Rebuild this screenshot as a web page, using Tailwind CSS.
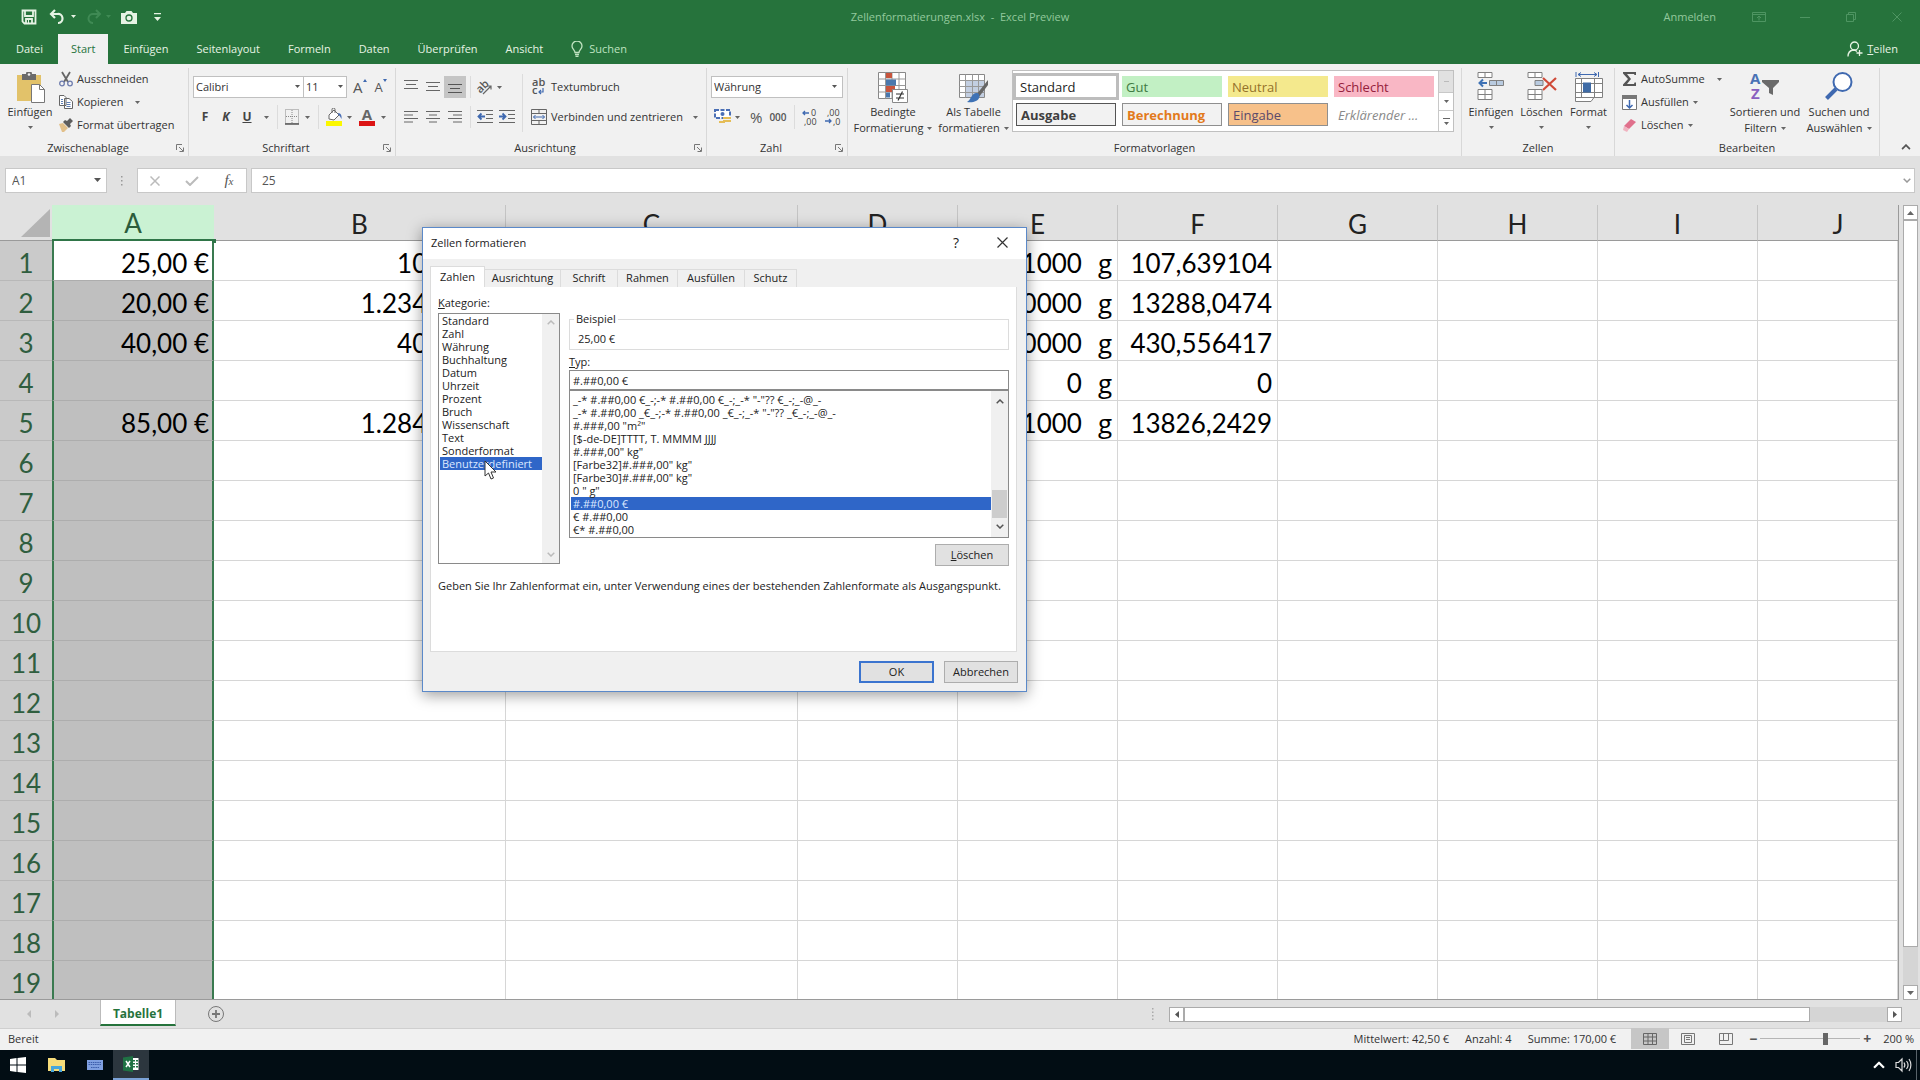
<!DOCTYPE html>
<html lang="de">

<head>
    <meta charset="UTF-8" />
    <meta name="viewport" content="width=device-width, initial-scale=1.0" />
    <title>Zellenformatierungen.xlsx - Excel Preview</title>
    <script src="https://cdn.jsdelivr.net/npm/@tailwindcss/browser@4"></script>
</head>

<body class="h-screen overflow-hidden relative flex flex-col bg-[#e1e1e1] font-['Open_Sans',sans-serif] text-[11px] leading-4 text-[#333]">

    <!-- Shared icons -->
    <svg class="hidden">
        <symbol id="caret" viewBox="0 0 7 4"><path d="M0 0h7L3.500 4z" fill="currentColor" /></symbol>
        <symbol id="launcher" viewBox="0 0 8 8"><path d="M.5 6V.5H6M3 3l4 4M7.500 3.500v4h-4" fill="none" stroke="#777" /></symbol>
        <symbol id="up" viewBox="0 0 8 5"><path d="M.7 4.300 4 1l3.300 3.300" fill="none" stroke="currentColor" stroke-width="1.500" /></symbol>
        <symbol id="down" viewBox="0 0 8 5"><path d="M.7.7 4 4 7.300.7" fill="none" stroke="currentColor" stroke-width="1.500" /></symbol>
    </svg>

    <!-- Title bar -->
    <header class="bg-[#26733c] text-[#e6f3e4]">
        <div class="h-[34px] flex items-center justify-between relative pb-px">
            <div class="flex items-center pl-[21px]">
                <button aria-label="Speichern"><svg class="w-4 h-4" viewBox="0 0 16 16" fill="none" stroke="currentColor" stroke-width="1.800"><path d="M1.500 1.500h13v13h-11l-2-2zM4 2v5h8V2M5 14v-4h6v4" /><path d="M7 11h1v3H7z" fill="currentColor" stroke="none" /></svg></button>
                <button class="ml-3" aria-label="Rückgängig"><svg class="w-4 h-4" viewBox="0 0 16 16" fill="none" stroke="currentColor" stroke-width="2.200"><path d="M6 1 2 5l4 4M2 5h6.500a4.500 4.500 0 0 1 1 9H9" /></svg></button>
                <svg class="w-[5px] h-[3px] ml-1.5"><use href="#caret" /></svg>
                <button class="ml-2.5 text-[#3f8a54]" aria-label="Wiederholen"><svg class="w-4 h-4" viewBox="0 0 16 16" fill="none" stroke="currentColor" stroke-width="2"><path d="m10 1 4 4-4 4M14 5H7.500a4.500 4.500 0 0 0-1 9H7" /></svg></button>
                <svg class="w-[5px] h-[3px] ml-1 text-[#3f8a54]"><use href="#caret" /></svg>
                <button class="ml-2.5" aria-label="Kamera"><svg class="w-4 h-4" viewBox="0 0 16 16"><path d="M0 4h4l1.500-2h5L12 4h4v11H0z" fill="currentColor" /><circle cx="8" cy="9" r="3" fill="none" stroke="#26733c" stroke-width="1.300" /></svg></button>
                <button class="ml-[17px]" aria-label="Anpassen"><svg class="w-[7px] h-2" viewBox="0 0 7 8" fill="currentColor"><path d="M0 0h7v1.300H0zM0 4h7L3.500 8z" /></svg></button>
            </div>
            <div class="absolute inset-x-0 text-center text-[#93c99d] pointer-events-none">Zellenformatierungen.xlsx &nbsp;-&nbsp; Excel Preview</div>
            <div class="flex items-center pr-[18px] text-[#4e9562]">
                <a href="#" class="text-[#93c99d] mr-9">Anmelden</a>
                <button class="mr-[34px]" aria-label="Menüband anzeigen"><svg class="w-3.5 h-2.5" viewBox="0 0 14 10" fill="none" stroke="currentColor"><path d="M.5.5h13v9H.5zM1 2.500h12M7 8.500v-4M5 6l2-2 2 2" /></svg></button>
                <button class="mr-9" aria-label="Minimieren"><svg class="w-2.5 h-2.5" viewBox="0 0 10 10" stroke="currentColor"><path d="M0 5.500h10" /></svg></button>
                <button class="mr-9" aria-label="Verkleinern"><svg class="w-2.5 h-2.5" viewBox="0 0 10 10" fill="none" stroke="currentColor"><path d="M.5 2.500h7v7h-7zM2.500 2V.5h7v7H8" /></svg></button>
                <button aria-label="Schließen"><svg class="w-2.5 h-2.5" viewBox="0 0 10 10" stroke="currentColor"><path d="m.5.5 9 9m0-9-9 9" /></svg></button>
            </div>
        </div>
        <nav class="h-[30px] flex items-stretch pl-[2px]">
            <button class="px-[14px]">Datei</button>
            <button class="px-[13px] mx-px bg-[#f1f1f1] text-[#26733c]">Start</button>
            <button class="px-[14px]">Einfügen</button>
            <button class="px-[14px]">Seitenlayout</button>
            <button class="px-[14px]">Formeln</button>
            <button class="px-[14px]">Daten</button>
            <button class="px-[14px]">Überprüfen</button>
            <button class="px-[14px]">Ansicht</button>
            <button class="px-[14px] flex items-center gap-1.5 text-[#bfe3c0]">
                <svg class="w-3 h-4" viewBox="0 0 12 16" fill="none" stroke="currentColor" stroke-width="1.300"><path d="M4 11.500C4 9 1 8 1 5a5 5 0 0 1 10 0c0 3-3 4-3 6.500zM4 13.500h4M4.500 15.300h3" /></svg>Suchen
            </button>
            <button class="ml-auto pr-[22px] flex items-center gap-1">
                <svg class="w-4 h-4" viewBox="0 0 16 16" fill="none" stroke="currentColor" stroke-width="1.300"><circle cx="7.500" cy="5" r="4" /><path d="M1 15.500c0-4 2.500-6 5-6.500 2 0 3 .5 4 1.500M12.500 9v6M9.500 12h6" /></svg>
                <span><u>T</u>eilen</span>
            </button>
        </nav>
    </header>

    <!-- Ribbon -->
    <div class="h-[92px] bg-[#f1f1f1] flex pt-1">
        <!-- Zwischenablage -->
        <section class="w-[189px] shrink-0 border-r border-[#d8d8d8] flex flex-col">
            <div class="flex-1 flex pl-[5px]">
                <button class="w-[50px] h-[68px] flex flex-col items-center pt-1">
                    <svg class="w-[30px] h-[32px]" viewBox="0 0 30 32"><path d="M2 3h24v26H2z" fill="#e2c26a" /><path d="M7 2h4a3 3 0 0 1 6 0h4v6H7z" fill="#6a6a6a" /><circle cx="14" cy="2.500" r="1.300" fill="#f1f1f1" /><path d="M16.500 12.500h8l5 5v13h-13z" fill="#fff" stroke="#777" /><path d="M24.500 12.500v5h5" fill="none" stroke="#777" /></svg>
                    <span>Einfügen</span>
                    <svg class="w-[5px] h-[3px] mt-1.5 text-[#666]"><use href="#caret" /></svg>
                </button>
                <div class="flex flex-col pl-1">
                    <button class="h-[23px] pb-px flex items-center gap-1"><svg class="w-3.5 h-4" viewBox="0 0 14 16" fill="none"><path d="m3 1 6 10M11 1 5 11" stroke="#666" stroke-width="1.800" /><circle cx="3" cy="12.500" r="2.300" stroke="#6f7dae" stroke-width="1.300" /><circle cx="11" cy="12.500" r="2.300" stroke="#6f7dae" stroke-width="1.300" /></svg>Ausschneiden</button>
                    <button class="h-[23px] pb-px flex items-center gap-1"><svg class="w-3.5 h-3.5" viewBox="0 0 14 14" fill="#fff" stroke="#666"><path d="M.5.5H5l2 2v8H.5zM5.500 3.500H10l3.500 3v7h-8z" /><path d="M7.500 7.500h4M7.500 9.500h4M7.500 11.500h4M2 4.500h2M2 6.500h2M2 8.500h2" stroke="#5f7fb5" /></svg>Kopieren<svg class="w-[5px] h-[3px] ml-2 text-[#666]"><use href="#caret" /></svg></button>
                    <button class="h-[23px] pb-px flex items-center gap-1"><svg class="w-3.5 h-3.5" viewBox="0 0 14 14"><path d="m0 6 4-1 5 5-4 4H3z" fill="#e2c08a" /><path d="m4 4 2-2 2 1 3-3 3 3-3 3 1 2-2 2z" fill="#5d5d5d" /></svg>Format übertragen</button>
                </div>
            </div>
            <div class="h-4 flex items-center pr-1"><span class="flex-1 text-center">Zwischenablage</span><button aria-label="Mehr Zwischenablage"><svg class="w-2 h-2"><use href="#launcher" /></svg></button></div>
        </section>

        <!-- Schriftart -->
        <section class="w-[207px] shrink-0 border-r border-[#d8d8d8] flex flex-col">
            <div class="flex-1 pl-1 pt-2">
                <div class="flex items-center h-[22px]">
                    <label class="relative"><select aria-label="Schriftart" class="appearance-none w-[111px] h-[22px] border border-[#c0c0c0] bg-white pl-0.5"><option>Calibri</option></select><svg class="absolute right-1 top-[9px] w-[5px] h-[3px] text-[#555]"><use href="#caret" /></svg></label>
                    <label class="relative"><select aria-label="Schriftgrad" class="appearance-none w-[43px] h-[22px] border border-l-0 border-[#c0c0c0] bg-white pl-0.5"><option>11</option></select><svg class="absolute right-1 top-[9px] w-[5px] h-[3px] text-[#555]"><use href="#caret" /></svg></label>
                    <button class="ml-1.5 flex text-[15px] text-[#555]" aria-label="Schriftgrad vergrößern">A<svg class="w-1 h-[3px]" viewBox="0 0 4 3"><path d="M0 3h4L2 0z" fill="#3f69b0" /></svg></button>
                    <button class="ml-2 flex text-[13px] text-[#555]" aria-label="Schriftgrad verkleinern">A<svg class="w-1 h-[3px]" viewBox="0 0 4 3"><path d="M0 0h4L2 3z" fill="#3f69b0" /></svg></button>
                </div>
                <div class="flex items-center h-[22px] mt-2 pl-[7px] text-[12px] font-bold text-[#444]">
                    <button class="w-[10px]">F</button>
                    <button class="w-[10px] ml-[11px] italic">K</button>
                    <button class="w-[10px] ml-[11px] underline">U</button>
                    <svg class="w-[5px] h-[3px] ml-3 text-[#666]"><use href="#caret" /></svg>
                    <span class="ml-2 w-px h-6 bg-[#dcdcdc]"></span>
                    <button class="ml-[7px]" aria-label="Rahmen"><svg class="w-3.5 h-4" viewBox="0 0 14 16" fill="none" stroke="#888"><path d="M.5.5h13v14H.5zM7 1v13M1 7.500h12" stroke-dasharray="1 1" /><path d="M0 15h14" stroke="#555" stroke-width="1.500" /></svg></button>
                    <svg class="w-[5px] h-[3px] ml-1.5 text-[#666]"><use href="#caret" /></svg>
                    <span class="ml-2 w-px h-6 bg-[#dcdcdc]"></span>
                    <button class="ml-[7px]" aria-label="Füllfarbe"><svg class="w-[17px] h-[18px]" viewBox="0 0 17 18"><path d="m3 7 5-5 5 5-5 5-5-1z" fill="#fff" stroke="#666" /><path d="M6 5V1.500a1.500 1.500 0 0 1 3 0V5" fill="none" stroke="#666" /><path d="M12 5c3 0 4 3 3.500 6-1-1-1-3-3-4z" fill="#4a6fb5" /><path d="M0 13h16v5H0z" fill="#fbf700" /></svg></button>
                    <svg class="w-[5px] h-[3px] ml-1 text-[#666]"><use href="#caret" /></svg>
                    <button class="ml-[7px] w-4 h-[18px] flex justify-center items-start text-[15px] leading-[13px] text-[#666] border-b-5 border-[#dc1414]" aria-label="Schriftfarbe">A</button>
                    <svg class="w-[5px] h-[3px] ml-1.5 text-[#666]"><use href="#caret" /></svg>
                </div>
            </div>
            <div class="h-4 flex items-center pr-1"><span class="flex-1 text-center">Schriftart</span><button aria-label="Mehr Schriftart"><svg class="w-2 h-2"><use href="#launcher" /></svg></button></div>
        </section>

        <!-- Ausrichtung -->
        <section class="w-[311px] shrink-0 border-r border-[#d8d8d8] flex flex-col">
            <div class="flex-1 flex">
                <div class="w-[127px] h-[58px] border-r border-[#dcdcdc] mt-1.5 pt-0.5 pl-[4px]">
                    <div class="flex items-center h-[22px]">
                        <button class="w-[22px] h-[22px] flex justify-center pt-1" aria-label="Oben"><svg class="w-3.5 h-2.5" viewBox="0 0 14 10" stroke="#666"><path d="M0 .5h14M2 4.500h10M0 8.500h14" /></svg></button>
                        <button class="w-[22px] h-[22px] flex justify-center items-center" aria-label="Mitte"><svg class="w-3.5 h-2.5" viewBox="0 0 14 10" stroke="#666"><path d="M0 .5h14M2 4.500h10M0 8.500h14" /></svg></button>
                        <button class="w-[22px] h-[22px] flex justify-center items-end pb-1 bg-[#c5c5c5]" aria-label="Unten"><svg class="w-3.5 h-2.5" viewBox="0 0 14 10" stroke="#555"><path d="M0 .5h14M2 4.500h10M0 8.500h14" /></svg></button>
                        <span class="ml-1 w-px h-[22px] bg-[#dcdcdc]"></span>
                        <button class="ml-1.5" aria-label="Orientierung"><svg class="w-4 h-4 overflow-visible" viewBox="0 0 16 16"><text x="0" y="11" transform="rotate(-45 6 9)" font-size="11" font-weight="600" fill="#555">ab</text><path d="m6 15 8-8M10.500 7H14v3.500" fill="none" stroke="#666" stroke-width="1.200" /></svg></button>
                        <svg class="w-[5px] h-[3px] ml-1 text-[#666]"><use href="#caret" /></svg>
                    </div>
                    <div class="flex items-center h-[22px] mt-2">
                        <button class="w-[22px] flex justify-center" aria-label="Linksbündig"><svg class="w-3.5 h-3" viewBox="0 0 14 12" stroke="#666"><path d="M0 .5h14M0 4h9M0 7.500h14M0 11h9" /></svg></button>
                        <button class="w-[22px] flex justify-center" aria-label="Zentriert"><svg class="w-3.5 h-3" viewBox="0 0 14 12" stroke="#666"><path d="M0 .5h14M3 4h8M0 7.500h14M3 11h8" /></svg></button>
                        <button class="w-[22px] flex justify-center" aria-label="Rechtsbündig"><svg class="w-3.5 h-3" viewBox="0 0 14 12" stroke="#666"><path d="M0 .5h14M5 4h9M0 7.500h14M5 11h9" /></svg></button>
                        <span class="ml-1 w-px h-[22px] bg-[#dcdcdc]"></span>
                        <button class="ml-1.5" aria-label="Einzug verkleinern"><svg class="w-4 h-3.5" viewBox="0 0 16 14" fill="none" stroke="#666"><path d="M0 .5h16M9 4.500h7M9 8.500h7M0 12.500h16" /><path d="M8 6.500H2M4.500 3.500l-3 3 3 3" stroke="#3f69b0" stroke-width="1.800" /></svg></button>
                        <button class="ml-1.5" aria-label="Einzug vergrößern"><svg class="w-4 h-3.5" viewBox="0 0 16 14" fill="none" stroke="#666"><path d="M0 .5h16M9 4.500h7M9 8.500h7M0 12.500h16" /><path d="M0 6.500h6M3.500 3.500l3 3-3 3" stroke="#3f69b0" stroke-width="1.800" /></svg></button>
                    </div>
                </div>
                <div class="pt-2 pl-2">
                    <button class="flex items-center gap-1 h-[22px]"><svg class="w-4 h-4 overflow-visible" viewBox="0 0 16 16"><text x="1" y="7" font-size="11" font-weight="600" fill="#555">ab</text><text x="1" y="15" font-size="11" font-weight="600" fill="#555">c</text><path d="M12 9v4H8.500M10 11l-2 2 2 2" fill="none" stroke="#3f69b0" stroke-width="1.200" /></svg>Textumbruch</button>
                    <button class="flex items-center gap-1 h-[22px] mt-2"><svg class="w-4 h-4" viewBox="0 0 16 16" fill="none" stroke="#666"><path d="M.5.5h15v15H.5zM.5 4.500h15M.5 11.500h15M8 .5v4M8 11.500v4" /><path d="M2.500 8h11M4.500 6l-2 2 2 2M11.500 6l2 2-2 2" stroke="#3f69b0" /></svg>Verbinden und zentrieren<svg class="w-[5px] h-[3px] ml-1.5 text-[#666]"><use href="#caret" /></svg></button>
                </div>
            </div>
            <div class="h-4 flex items-center pr-1"><span class="flex-1 text-center">Ausrichtung</span><button aria-label="Mehr Ausrichtung"><svg class="w-2 h-2"><use href="#launcher" /></svg></button></div>
        </section>

        <!-- Zahl -->
        <section class="w-[141px] shrink-0 border-r border-[#d8d8d8] flex flex-col">
            <div class="flex-1 pl-1 pt-2">
                <label class="relative block"><select aria-label="Zahlenformat" class="appearance-none w-[132px] h-[22px] border border-[#c0c0c0] bg-white pl-0.5"><option>Währung</option></select><svg class="absolute right-2.5 top-[9px] w-[5px] h-[3px] text-[#555]"><use href="#caret" /></svg></label>
                <div class="flex items-center h-[22px] mt-2 pl-[3px]">
                    <button aria-label="Buchhaltungszahlenformat"><svg class="w-[17px] h-4" viewBox="0 0 17 16"><path d="M1 1h15v8H1z" fill="#fff" stroke="#4a6fb5" stroke-width="2" stroke-dasharray="4 1.500" /><circle cx="8.500" cy="5" r="2" fill="#4a6fb5" /><path d="M9 8h8v2H9zM9 11h8v2H9zM5 12h6v2H5z" fill="#e5bd57" /></svg></button>
                    <svg class="w-[5px] h-[3px] ml-1 text-[#666]"><use href="#caret" /></svg>
                    <button class="ml-2.5 text-[15px] text-[#555]">%</button>
                    <button class="ml-[7px] text-[10px] font-semibold text-[#555]">000</button>
                    <span class="ml-[7px] w-px h-6 bg-[#dcdcdc]"></span>
                    <button class="ml-[7px]" aria-label="Dezimalstelle hinzufügen"><svg class="w-4 h-4 overflow-visible" viewBox="0 0 16 16"><text x="9" y="7" font-size="9" fill="#444">0</text><text x="2" y="16" font-size="9" fill="#444">,00</text><path d="M7 4H1M3 2 1 4l2 2" fill="none" stroke="#3f69b0" stroke-width="1.300" /></svg></button>
                    <button class="ml-[7px]" aria-label="Dezimalstelle entfernen"><svg class="w-4 h-4 overflow-visible" viewBox="0 0 16 16"><text x="2" y="7" font-size="9" fill="#444">,00</text><text x="8" y="16" font-size="9" fill="#444">,0</text><path d="M0 12h6M4 10l2 2-2 2" fill="none" stroke="#3f69b0" stroke-width="1.300" /></svg></button>
                </div>
            </div>
            <div class="h-4 flex items-center pr-1"><span class="flex-1 text-center">Zahl</span><button aria-label="Mehr Zahl"><svg class="w-2 h-2"><use href="#launcher" /></svg></button></div>
        </section>

        <!-- Formatvorlagen -->
        <section class="w-[614px] shrink-0 border-r border-[#d8d8d8] flex flex-col">
            <div class="flex-1 flex pl-px">
                <button class="w-[88px] h-[68px] flex flex-col items-center pt-1">
                    <svg class="w-[30px] h-[32px]" viewBox="0 0 30 32"><path d="M.5.5h27v26H.5z" fill="#fff" stroke="#888" /><path d="M.5 7h27M.5 13.500h27M.5 20h27M7.500.5v26M14 .5v26M21 .5v26" stroke="#999" /><path d="M8 1h6v5H8zM8 14h9v6H8z" fill="#c8553d" /><path d="M8 7.500h10v6H8zM8 20.500h4v5H8z" fill="#4a78ad" /><path d="M14.500 17.500h15v13h-15z" fill="#fff" stroke="#888" /><path d="M18 22h8M18 26h8M24.500 19.500l-4.500 9" stroke="#333" stroke-width="1.200" /></svg>
                    <span>Bedingte</span>
                    <span class="flex items-center gap-1">Formatierung<svg class="w-[5px] h-[3px] text-[#666]"><use href="#caret" /></svg></span>
                </button>
                <button class="w-[73px] h-[68px] flex flex-col items-center pt-1">
                    <svg class="w-[30px] h-[32px]" viewBox="0 0 30 32"><path d="M.5 2.500h25v23H.5z" fill="#fff" stroke="#888" /><path d="M7 9h18v16H7z" fill="#c3cfe2" /><path d="M.5 8.500h25M.5 14.500h25M.5 20.500h25M6.500 2.500v23M13.500 2.500v23M19.500 2.500v23" stroke="#999" /><path d="M29 8v5l-9 12-3-2z" fill="#666" /><path d="M17 21c3 0 4 2 3 5s-6 5-12 4c4-2 4-8 9-9z" fill="#3f72b5" /></svg>
                    <span>Als Tabelle</span>
                    <span class="flex items-center gap-1">formatieren<svg class="w-[5px] h-[3px] text-[#666]"><use href="#caret" /></svg></span>
                </button>
                <div class="mt-0.5 ml-0.5 w-[442px] h-[62px] bg-white border border-[#c0c0c0] flex text-[13px]">
                    <div class="flex-1 grid grid-cols-4 gap-x-1.5 gap-y-1.5 pl-[3px] pr-1 pt-[5px] pb-[5px]">
                        <button class="text-left px-1 bg-white outline-3 outline-[#bdbdbd] text-[#222]">Standard</button>
                        <button class="text-left px-1 bg-[#c2f0c4] text-[#3f7a42]">Gut</button>
                        <button class="text-left px-1 bg-[#f4e98d] text-[#94712a]">Neutral</button>
                        <button class="text-left px-1 bg-[#f9b7c5] text-[#95213c]">Schlecht</button>
                        <button class="text-left px-1 bg-[#f2f2f2] border border-[#555] font-bold text-[#3f3f3f]">Ausgabe</button>
                        <button class="text-left px-1 bg-[#f2f2f2] border border-[#8f8f8f] font-bold text-[#e27a1c]">Berechnung</button>
                        <button class="text-left px-1 bg-[#f7c18a] border border-[#8f8f8f] text-[#5b4a6b]">Eingabe</button>
                        <button class="text-left px-1 italic text-[#8a8a8a]">Erklärender ...</button>
                    </div>
                    <div class="w-[15px] border-l border-[#c8c8c8] flex flex-col text-[#666]">
                        <button class="h-[21px] flex items-center justify-center bg-[#e1e1e1]" aria-label="Nach oben"><svg class="w-[5px] h-px" viewBox="0 0 5 1"><path d="M0 0h5v1H0z" fill="#bbb" /></svg></button>
                        <button class="h-[19px] flex items-center justify-center border-y border-[#c8c8c8]" aria-label="Nach unten"><svg class="w-[5px] h-[3px]"><use href="#caret" /></svg></button>
                        <button class="flex-1 flex items-center justify-center" aria-label="Mehr"><svg class="w-[7px] h-[7px]" viewBox="0 0 7 7" fill="currentColor"><path d="M0 0h7v1H0zM1 4h5L3.500 7z" /></svg></button>
                    </div>
                </div>
            </div>
            <div class="h-4 text-center">Formatvorlagen</div>
        </section>

        <!-- Zellen -->
        <section class="w-[153px] shrink-0 border-r border-[#d8d8d8] flex flex-col">
            <div class="flex-1 flex justify-center">
                <button class="w-[51px] h-[68px] flex flex-col items-center pt-1">
                    <svg class="w-[28px] h-[32px]" viewBox="0 0 28 32" fill="#fff" stroke="#808080"><path d="M1 .5h14v5H1zM8 .5v5M1 17.500h14v10H1zM8 17.500v10M1 22.500h14" /><path d="M12.500 8.500h14v5h-14z" fill="#b9cbe0" /><path d="M19.500 8.500v5" /><path d="M10 11H3M6 7.500 2.500 11 6 14.500" fill="none" stroke="#3f72b5" stroke-width="2" /></svg>
                    <span>Einfügen</span><svg class="w-[5px] h-[3px] mt-1.5 text-[#666]"><use href="#caret" /></svg>
                </button>
                <button class="w-[50px] h-[68px] flex flex-col items-center pt-1">
                    <svg class="w-[30px] h-[32px]" viewBox="0 0 30 32" fill="#fff" stroke="#808080"><path d="M1 .5h14v5H1zM8 .5v5M1 17.500h14v10H1zM8 17.500v10M1 22.500h14" /><path d="M8 8.500h8v5H8z" fill="#b9cbe0" /><path d="m16 6 13 12M29 6 16 18" stroke="#cf4a38" stroke-width="2.200" /></svg>
                    <span>Löschen</span><svg class="w-[5px] h-[3px] mt-1.5 text-[#666]"><use href="#caret" /></svg>
                </button>
                <button class="w-[44px] h-[68px] flex flex-col items-center pt-1">
                    <svg class="w-[28px] h-[32px]" viewBox="0 0 28 32" fill="#fff" stroke="#808080"><path d="M.5 6.500h27v19H19l-3 4H.5z" /><path d="M.5 11.500h27M.5 20.500h27M.5 25.500H19M6.500 6.500v19M19.500 6.500v19" /><path d="M8 10.500h8v10H8z" fill="#3f6ba5" stroke="none" /><path d="M1 0v5M23.500 0v5M3 2.500h19M6 .5l-3 2 3 2M19 .5l3 2-3 2" fill="none" stroke="#3f69b0" /></svg>
                    <span>Format</span><svg class="w-[5px] h-[3px] mt-1.5 text-[#666]"><use href="#caret" /></svg>
                </button>
            </div>
            <div class="h-4 text-center">Zellen</div>
        </section>

        <!-- Bearbeiten -->
        <section class="w-[265px] shrink-0 border-r border-[#d8d8d8] flex flex-col">
            <div class="flex-1 flex pl-[7px]">
                <div class="w-[105px] flex flex-col">
                    <button class="h-[23px] pb-px flex items-center gap-1"><svg class="w-[15px] h-4" viewBox="0 0 15 16"><path d="M1 1h13v3h-1.500L12 3H5l4 5-4 5h7l.5-1.500H14V15H1v-1.500L6 8 1 2.500z" fill="#555" /></svg>AutoSumme<svg class="w-[5px] h-[3px] ml-2 text-[#666]"><use href="#caret" /></svg></button>
                    <button class="h-[23px] pb-px flex items-center gap-1"><svg class="w-[15px] h-[15px]" viewBox="0 0 15 15"><path d="M.5.5h14v14H.5z" fill="#fff" stroke="#777" /><path d="M0 0h15v4H0z" fill="#777" /><path d="M7.500 5v8M4.500 10l3 3 3-3" fill="none" stroke="#3f69b0" stroke-width="1.500" /></svg>Ausfüllen<svg class="w-[5px] h-[3px] text-[#666]"><use href="#caret" /></svg></button>
                    <button class="h-[23px] pb-px flex items-center gap-1"><svg class="w-[15px] h-[15px]" viewBox="0 0 15 15"><path d="m2 8 7-7 5 3-7 7z" fill="#e0708c" /><path d="m2 8 5 3-2 3-4-2z" fill="#f0b3c0" /></svg>Löschen<svg class="w-[5px] h-[3px] text-[#666]"><use href="#caret" /></svg></button>
                </div>
                <button class="w-[76px] h-[68px] flex flex-col items-center pt-1">
                    <svg class="w-[30px] h-[32px] overflow-visible" viewBox="0 0 30 32"><text x="0" y="12" font-size="15" font-weight="700" fill="#4a72b5">A</text><text x="1" y="27" font-size="15" font-weight="700" fill="#8a5fc0">Z</text><path d="M12 8h17v2l-6 6v7l-4-2v-5l-7-6z" fill="#6a6a6a" /></svg>
                    <span>Sortieren und</span>
                    <span class="flex items-center gap-1">Filtern<svg class="w-[5px] h-[3px] text-[#666]"><use href="#caret" /></svg></span>
                </button>
                <button class="w-[72px] h-[68px] flex flex-col items-center pt-1">
                    <svg class="w-[28px] h-[32px]" viewBox="0 0 28 32" fill="none" stroke="#3f69b0"><circle cx="17.500" cy="10" r="9" fill="#fff" stroke-width="2" /><path d="M11 17 1.500 26.500" stroke-width="4" /></svg>
                    <span>Suchen und</span>
                    <span class="flex items-center gap-1">Auswählen<svg class="w-[5px] h-[3px] text-[#666]"><use href="#caret" /></svg></span>
                </button>
            </div>
            <div class="h-4 text-center">Bearbeiten</div>
        </section>
        <div class="flex-1 flex items-end justify-center pl-3"><button class="mb-1.5" aria-label="Menüband reduzieren"><svg class="w-2.5 h-1.5 text-[#555]" viewBox="0 0 8 5"><use href="#up" /></svg></button></div>
    </div>

    <!-- Formula bar -->
    <div class="pt-3 pl-[5px] pr-[5px] h-[37px] flex text-[12px] text-[#555]">
        <label class="relative"><input aria-label="Namenfeld" value="A1" class="w-[102px] h-[25px] bg-white border border-[#c8c8c8] pl-1.5" /><svg class="absolute right-1.5 top-[10px] w-[7px] h-1"><use href="#caret" /></svg></label>
        <svg class="w-[30px] h-[25px]" viewBox="0 0 30 25" fill="#999"><path d="M14 8h1.500v1.500H14zM14 12h1.500v1.500H14zM14 16h1.500v1.500H14z" /></svg>
        <div class="w-[110px] h-[25px] bg-white border border-[#c8c8c8] flex items-center justify-around">
            <button aria-label="Abbrechen"><svg class="w-2.5 h-2.5" viewBox="0 0 10 10" stroke="#bbb" stroke-width="1.500"><path d="m.5.5 9 9m0-9-9 9" /></svg></button>
            <button aria-label="Eingeben"><svg class="w-3.5 h-2.5" viewBox="0 0 14 10" fill="none" stroke="#bbb" stroke-width="2"><path d="m1 5 4 4 8-8" /></svg></button>
            <button class="font-['Liberation_Serif',serif] italic text-[15px]">f<span class="text-[11px]">x</span></button>
        </div>
        <label class="relative flex-1 ml-1"><input aria-label="Bearbeitungsleiste" value="25" class="w-full h-[25px] bg-white border border-[#c8c8c8] pl-2.5" /><svg class="absolute right-1 top-[10px] w-2 h-[5px] text-[#999]"><use href="#down" /></svg></label>
    </div>

    <!-- Sheet -->
    <main class="flex-1 min-h-0 flex pt-3">
        <div class="flex-1 min-w-0 overflow-hidden border-r border-b border-[#9a9a9a]">
            <table class="w-full table-fixed border-separate border-spacing-0 font-['Lato','Open_Sans',sans-serif] text-[26px] leading-8 text-black">
                <colgroup>
                    <col class="w-[52px]" /><col class="w-[162px]" /><col class="w-[292px]" /><col class="w-[292px]" />
                    <col class="w-[160px]" /><col class="w-[160px]" /><col class="w-[160px]" /><col class="w-[160px]" />
                    <col class="w-[160px]" /><col class="w-[160px]" /><col />
                </colgroup>
                <thead>
                    <tr id="columnRow">
                        <th class="h-9 p-0 border-b border-[#9a9a9a]"><svg class="w-[29px] h-[28px] ml-auto mr-0.5" viewBox="0 0 29 28"><path d="M29 0v28H0z" fill="#b4b4b4" /></svg></th>
                    </tr>
                </thead>
                <tbody id="sheetRows"></tbody>
            </table>
        </div>
        <div class="w-[21px] flex flex-col items-center pl-px">
            <button class="w-[15px] h-[15px] bg-white border border-[#ababab] flex items-center justify-center" aria-label="Nach oben"><svg class="w-[7px] h-1 rotate-180 text-[#666]"><use href="#caret" /></svg></button>
            <div class="flex-1 w-[15px] bg-[#d5d5d5]"><div class="h-[95%] bg-white border border-[#ababab]"></div></div>
            <button class="w-[15px] h-[15px] bg-white border border-[#ababab] flex items-center justify-center" aria-label="Nach unten"><svg class="w-[7px] h-1 text-[#666]"><use href="#caret" /></svg></button>
        </div>
    </main>

    <!-- Sheet tabs -->
    <div class="h-[29px] flex items-start border-b border-[#cfcfcf]">
        <button class="ml-[27px] mt-2.5" aria-label="Vorheriges Blatt"><svg class="w-[5px] h-2" viewBox="0 0 5 8"><path d="M4 0v8L0 4z" fill="#bbb" /></svg></button>
        <button class="ml-[22px] mt-2.5" aria-label="Nächstes Blatt"><svg class="w-[5px] h-2" viewBox="0 0 5 8"><path d="M1 0v8l4-4z" fill="#bbb" /></svg></button>
        <button class="ml-[41px] w-[76px] h-[26px] pt-[3px] bg-white border-x border-b-2 border-x-[#bbb] border-b-[#26733c] font-bold text-[12px] text-[#26733c]">Tabelle1</button>
        <button class="ml-8 mt-1.5" aria-label="Neues Blatt"><svg class="w-4 h-4" viewBox="0 0 16 16" fill="none" stroke="#777"><circle cx="8" cy="8" r="7.500" /><path d="M8 4v8M4 8h8" stroke-width="1.800" /></svg></button>
        <svg class="ml-auto mt-2 w-1 h-3" viewBox="0 0 4 12" fill="#aaa"><path d="M1 0h1.500v1.500H1zM1 3.500h1.500V5H1zM1 7h1.500v1.500H1zM1 10.500h1.500V12H1z" /></svg>
        <div class="w-[733px] ml-[14px] mr-[18px] mt-[7px] h-[15px] flex bg-[#d5d5d5]">
            <button class="w-[15px] bg-white border border-[#ababab] flex items-center justify-center" aria-label="Nach links"><svg class="w-1 h-[7px]" viewBox="0 0 4 7"><path d="M4 0v7L0 3.500z" fill="#555" /></svg></button>
            <div class="flex-1"><div class="h-full w-[89%] bg-white border border-[#ababab]"></div></div>
            <button class="w-[15px] bg-white border border-[#ababab] flex items-center justify-center" aria-label="Nach rechts"><svg class="w-1 h-[7px]" viewBox="0 0 4 7"><path d="M0 0v7l4-3.500z" fill="#555" /></svg></button>
        </div>
    </div>

    <!-- Status bar -->
    <footer class="h-[21px] pb-0.5 bg-[#f1f1f1] flex items-center pl-2 pr-1.5">
        <span>Bereit</span>
        <span class="ml-auto mr-4">Mittelwert: 42,50 €</span>
        <span class="mr-4">Anzahl: 4</span>
        <span class="mr-[15px]">Summe: 170,00 €</span>
        <button class="w-[38px] h-[21px] bg-[#c6c6c6] flex items-center justify-center" aria-label="Normal"><svg class="w-3.5 h-3" viewBox="0 0 14 12" fill="none" stroke="#666"><path d="M.5.5h13v11H.5zM.5 4h13M.5 8h13M5 .5v11M9.500.5v11" /></svg></button>
        <button class="w-[38px] h-full flex items-center justify-center" aria-label="Seitenlayout"><svg class="w-3.5 h-3" viewBox="0 0 14 12" fill="none" stroke="#777"><path d="M.5.5h13v11H.5zM3.500 2.500h7v7h-7zM5 4.500h4M5 6.500h4" /></svg></button>
        <button class="w-[38px] h-full flex items-center justify-center" aria-label="Umbruchvorschau"><svg class="w-3.5 h-3" viewBox="0 0 14 12" fill="none" stroke="#777"><path d="M.5.5h13v11H.5zM4.500.5v7M9.500.5v7M.5 7.500h9" /></svg></button>
        <button class="ml-1 text-[14px] font-bold text-[#555]">−</button>
        <input type="range" min="0" max="100" value="66" aria-label="Zoom" class="appearance-none w-[100px] h-3 mx-[3px] bg-[linear-gradient(#b5b5b5,#b5b5b5)] bg-[length:100%_1px] bg-center bg-no-repeat [&::-webkit-slider-thumb]:appearance-none [&::-webkit-slider-thumb]:w-[5px] [&::-webkit-slider-thumb]:h-3 [&::-webkit-slider-thumb]:bg-[#666]" />
        <button class="text-[14px] font-bold text-[#555]">+</button>
        <span class="ml-3">200 %</span>
    </footer>

    <!-- Taskbar -->
    <div class="h-[30px] bg-[#020d14] flex items-center justify-between text-white">
        <div class="flex h-full items-center">
            <button class="w-9 flex justify-center" aria-label="Start"><svg class="w-4 h-4" viewBox="0 0 16 16" fill="#fff"><path d="m0 2 6.500-1v6.500H0zM7.500 1 16 0v7.500H7.500zM0 8.500h6.500V15L0 14zM7.500 8.500H16V16l-8.500-1z" /></svg></button>
            <button class="w-10 flex justify-center" aria-label="Explorer"><svg class="w-[17px] h-[15px]" viewBox="0 0 17 15"><path d="M0 0h7l2 2h8v11H0z" fill="#f6dc7a" /><path d="M3 14V8h11v6h-3v-3H6v3z" fill="#47a6dc" /></svg></button>
            <button class="w-[37px] flex justify-center" aria-label="Tastatur"><svg class="w-4 h-2.5" viewBox="0 0 16 10"><path d="M0 0h16v10H0z" fill="#7f9fe0" /><path d="M1.500 2.500h13M1.500 4.500h13M4 7.500h8" stroke="#3b5caa" stroke-dasharray="1.500 .7" /></svg></button>
            <button class="w-9 h-full flex items-center justify-center bg-[#2c363e] border-b-2 border-[#7ba2d6]" aria-label="Excel"><svg class="w-4 h-4" viewBox="0 0 16 16"><path d="M8 2h7.500v12H8z" fill="#fff" /><path d="M10 4h2v1.500h-2zM13 4h2v1.500h-2zM10 7h2v1.500h-2zM13 7h2v1.500h-2zM10 10h2v1.500h-2zM13 10h2v1.500h-2z" fill="#1f7244" /><path d="m0 1.500 10-1.500v16L0 14.500z" fill="#1f7244" /><path d="m3 5 4 6M7 5l-4 6" stroke="#fff" stroke-width="1.500" /></svg></button>
        </div>
        <div class="flex h-full items-center pr-[3px]">
            <button class="mr-2.5" aria-label="Ausgeblendete Symbole"><svg class="w-3 h-2" viewBox="0 0 8 5"><use href="#up" /></svg></button>
            <button aria-label="Lautstärke"><svg class="w-[17px] h-4" viewBox="0 0 17 16" fill="none" stroke="#ddd" stroke-width="1.200"><path d="M1 5.500h2.500L7 2v12l-3.500-3.500H1zM9 5.500c1 1.500 1 3.500 0 5M11.500 4c2 2.500 2 5.500 0 8M14 2c2.500 3.500 2.500 8.500 0 12" /></svg></button>
            <span class="ml-1 w-px h-full bg-[#59636a]"></span>
        </div>
    </div>

    <!-- Dialog: Zellen formatieren -->
    <div role="dialog" aria-label="Zellen formatieren" class="absolute left-[422px] top-[227px] w-[605px] h-[465px] bg-[#f0f0f0] border border-[#5b89c9] shadow-[0_3px_14px_rgba(0,0,0,0.4)] flex flex-col text-[#222]">
        <div class="h-[31px] pb-0.5 bg-white flex items-center pl-2 pr-[18px]">
            <span class="flex-1">Zellen formatieren</span>
            <button class="mr-[38px] text-[14px]">?</button>
            <button aria-label="Schließen"><svg class="w-[11px] h-[11px]" viewBox="0 0 11 11" stroke="#333" stroke-width="1.200"><path d="m.5.5 10 10m0-10-10 10" /></svg></button>
        </div>
        <div class="pt-[7px] pl-[7px] flex items-end" role="tablist">
            <button role="tab" class="h-[21px] w-[55px] pb-px bg-white border border-b-0 border-[#dcdcdc]">Zahlen</button>
            <button role="tab" class="h-[18px] w-[76px] pb-0.5 border border-l-0 border-b-0 border-[#dcdcdc]">Ausrichtung</button>
            <button role="tab" class="h-[18px] w-[57px] pb-0.5 border border-l-0 border-b-0 border-[#dcdcdc]">Schrift</button>
            <button role="tab" class="h-[18px] w-[60px] pb-0.5 border border-l-0 border-b-0 border-[#dcdcdc]">Rahmen</button>
            <button role="tab" class="h-[18px] w-[67px] pb-0.5 border border-l-0 border-b-0 border-[#dcdcdc]">Ausfüllen</button>
            <button role="tab" class="h-[18px] w-[52px] pb-0.5 border border-l-0 border-b-0 border-[#dcdcdc]">Schutz</button>
        </div>
        <div class="mx-[7px] mr-[9px] h-[365px] bg-white border-x border-b border-[#dcdcdc] px-[7px] pt-2 flex flex-col">
            <div class="flex gap-[9px]">
                <div class="w-[122px]">
                    <div id="categoryLabel" class="h-[18px]"><u>K</u>ategorie:</div>
                    <div class="h-[251px] border border-[#8a8a8a] flex leading-[13px]">
                        <ul role="listbox" aria-labelledby="categoryLabel" class="flex-1 pl-px">
                            <li role="option" class="pl-0.5">Standard</li>
                            <li role="option" class="pl-0.5">Zahl</li>
                            <li role="option" class="pl-0.5">Währung</li>
                            <li role="option" class="pl-0.5">Buchhaltung</li>
                            <li role="option" class="pl-0.5">Datum</li>
                            <li role="option" class="pl-0.5">Uhrzeit</li>
                            <li role="option" class="pl-0.5">Prozent</li>
                            <li role="option" class="pl-0.5">Bruch</li>
                            <li role="option" class="pl-0.5">Wissenschaft</li>
                            <li role="option" class="pl-0.5">Text</li>
                            <li role="option" class="pl-0.5">Sonderformat</li>
                            <li role="option" aria-selected="true" class="pl-0.5 bg-[#2f66c8] text-[#dbe8ff]">Benutzerdefiniert</li>
                        </ul>
                        <div class="w-[17px] bg-[#f0f0f0] flex flex-col items-center justify-between py-1.5 text-[#bbb]">
                            <svg class="w-2 h-[5px]"><use href="#up" /></svg>
                            <svg class="w-2 h-[5px]"><use href="#down" /></svg>
                        </div>
                    </div>
                </div>
                <div class="flex-1 pt-4 flex flex-col">
                    <fieldset class="h-[39px] border border-[#dcdcdc] pl-2">
                        <legend class="px-0.5 -ml-1">Beispiel</legend>
                        <div class="pt-1">25,00 €</div>
                    </fieldset>
                    <label for="formatType" class="h-5 pt-1"><u>T</u>yp:</label>
                    <input id="formatType" value="#.##0,00 €" class="h-5 border border-[#8a8a8a] pl-[3px]" />
                    <div class="h-[148px] border border-[#8a8a8a] flex leading-[13px]">
                        <ul role="listbox" aria-label="Zahlenformate" class="flex-1 pl-px pt-0.5">
                            <li role="option" class="pl-0.5">_-* #.##0,00 €_-;-* #.##0,00 €_-;_-* "-"?? €_-;_-@_-</li>
                            <li role="option" class="pl-0.5">_-* #.##0,00 _€_-;-* #.##0,00 _€_-;_-* "-"?? _€_-;_-@_-</li>
                            <li role="option" class="pl-0.5">#.###,00 "m²"</li>
                            <li role="option" class="pl-0.5">[$-de-DE]TTTT, T. MMMM JJJJ</li>
                            <li role="option" class="pl-0.5">#.###,00" kg"</li>
                            <li role="option" class="pl-0.5">[Farbe32]#.###,00" kg"</li>
                            <li role="option" class="pl-0.5">[Farbe30]#.###,00" kg"</li>
                            <li role="option" class="pl-0.5">0 " g"</li>
                            <li role="option" aria-selected="true" class="pl-0.5 bg-[#2f66c8] text-[#dbe8ff]">#.##0,00 €</li>
                            <li role="option" class="pl-0.5">€ #.##0,00</li>
                            <li role="option" class="pl-0.5">€* #.##0,00</li>
                        </ul>
                        <div class="w-[17px] bg-[#f0f0f0] flex flex-col items-center py-2 text-[#555]">
                            <svg class="w-2 h-[5px]"><use href="#up" /></svg>
                            <span class="mt-auto mb-1.5 w-[15px] h-[28px] bg-[#cdcdcd]"></span>
                            <svg class="w-2 h-[5px]"><use href="#down" /></svg>
                        </div>
                    </div>
                    <button class="self-end mt-[6px] w-[74px] h-[22px] bg-[#e1e1e1] border border-[#adadad]"><u>L</u>öschen</button>
                </div>
            </div>
            <p class="mt-3 whitespace-nowrap">Geben Sie Ihr Zahlenformat ein, unter Verwendung eines der bestehenden Zahlenformate als Ausgangspunkt.</p>
        </div>
        <div class="flex-1 flex justify-end items-start gap-2.5 pt-[9px] pr-[8px]">
            <button class="w-[75px] h-[22px] bg-[#e1e1e1] border-2 border-[#3b74cf]">OK</button>
            <button class="w-[74px] h-[22px] bg-[#e1e1e1] border border-[#adadad]">Abbrechen</button>
        </div>
    </div>

    <!-- Mouse pointer -->
    <svg class="absolute left-[484px] top-[460px] w-[13px] h-5" viewBox="0 0 13 20"><path d="M1 1v15l3.500-3 2.500 6 2.500-1L7 12h5z" fill="#fff" stroke="#333" /></svg>

    <script>
        const columns = ['A', 'B', 'C', 'D', 'E', 'F', 'G', 'H', 'I', 'J'];
        const unit = '<span class="font-[\'Open_Sans\',sans-serif] ml-4">g</span>';
        const values = {
            1: { A: '25,00 €', B: '10,76 m²', E: '1000' + unit, F: '107,639104' },
            2: { A: '20,00 €', B: '1.234,50 m²', E: '10000' + unit, F: '13288,0474' },
            3: { A: '40,00 €', B: '40,00 m²', E: '40000' + unit, F: '430,556417' },
            4: { E: '0' + unit, F: '0' },
            5: { A: '85,00 €', B: '1.284,50 m²', E: '51000' + unit, F: '13826,2429' }
        };

        columns.forEach(name => {
            const th = document.createElement('th');
            th.textContent = name;
            if (name === 'A') {
                th.className = 'relative p-0 pt-0.5 font-normal bg-[#caf2d3] text-[#2b5c3c] border-b-2 border-[#2f7548] after:absolute after:right-[-2px] after:bottom-[-4px] after:w-1 after:h-1 after:bg-[#2f7548]';
            } else if (name === 'J') {
                th.className = 'p-0 pt-0.5 pl-5 font-normal text-[#222] border-b border-b-[#9a9a9a]';
            } else {
                th.className = 'p-0 pt-0.5 font-normal text-[#222] border-b border-r border-b-[#9a9a9a] border-r-[#c4c4c4]';
            }
            document.getElementById('columnRow').appendChild(th);
        });

        for (let row = 1; row <= 19; row++) {
            const tr = document.createElement('tr');
            let html = `<th class="h-10 p-0 pt-1 font-normal text-[#2f5e3f] bg-[#cacaca] border-b border-[#b8b8b8]">${row}</th>`;
            columns.forEach(name => {
                const text = (values[row] && values[row][name]) || '';
                if (name === 'A') {
                    html += `<td class="p-0 pt-1 pr-[3px] text-right border-x-2 border-b border-x-[#3a7a50] border-b-[#adadad] ${row === 1 ? 'bg-white' : 'bg-[#bfbfbf]'}">${text}</td>`;
                } else {
                    html += `<td class="p-0 pt-1 pr-[5px] text-right whitespace-nowrap bg-white border-b border-r border-[#d6d6d6]">${text}</td>`;
                }
            });
            tr.innerHTML = html;
            document.getElementById('sheetRows').appendChild(tr);
        }
    </script>
</body>

</html>
